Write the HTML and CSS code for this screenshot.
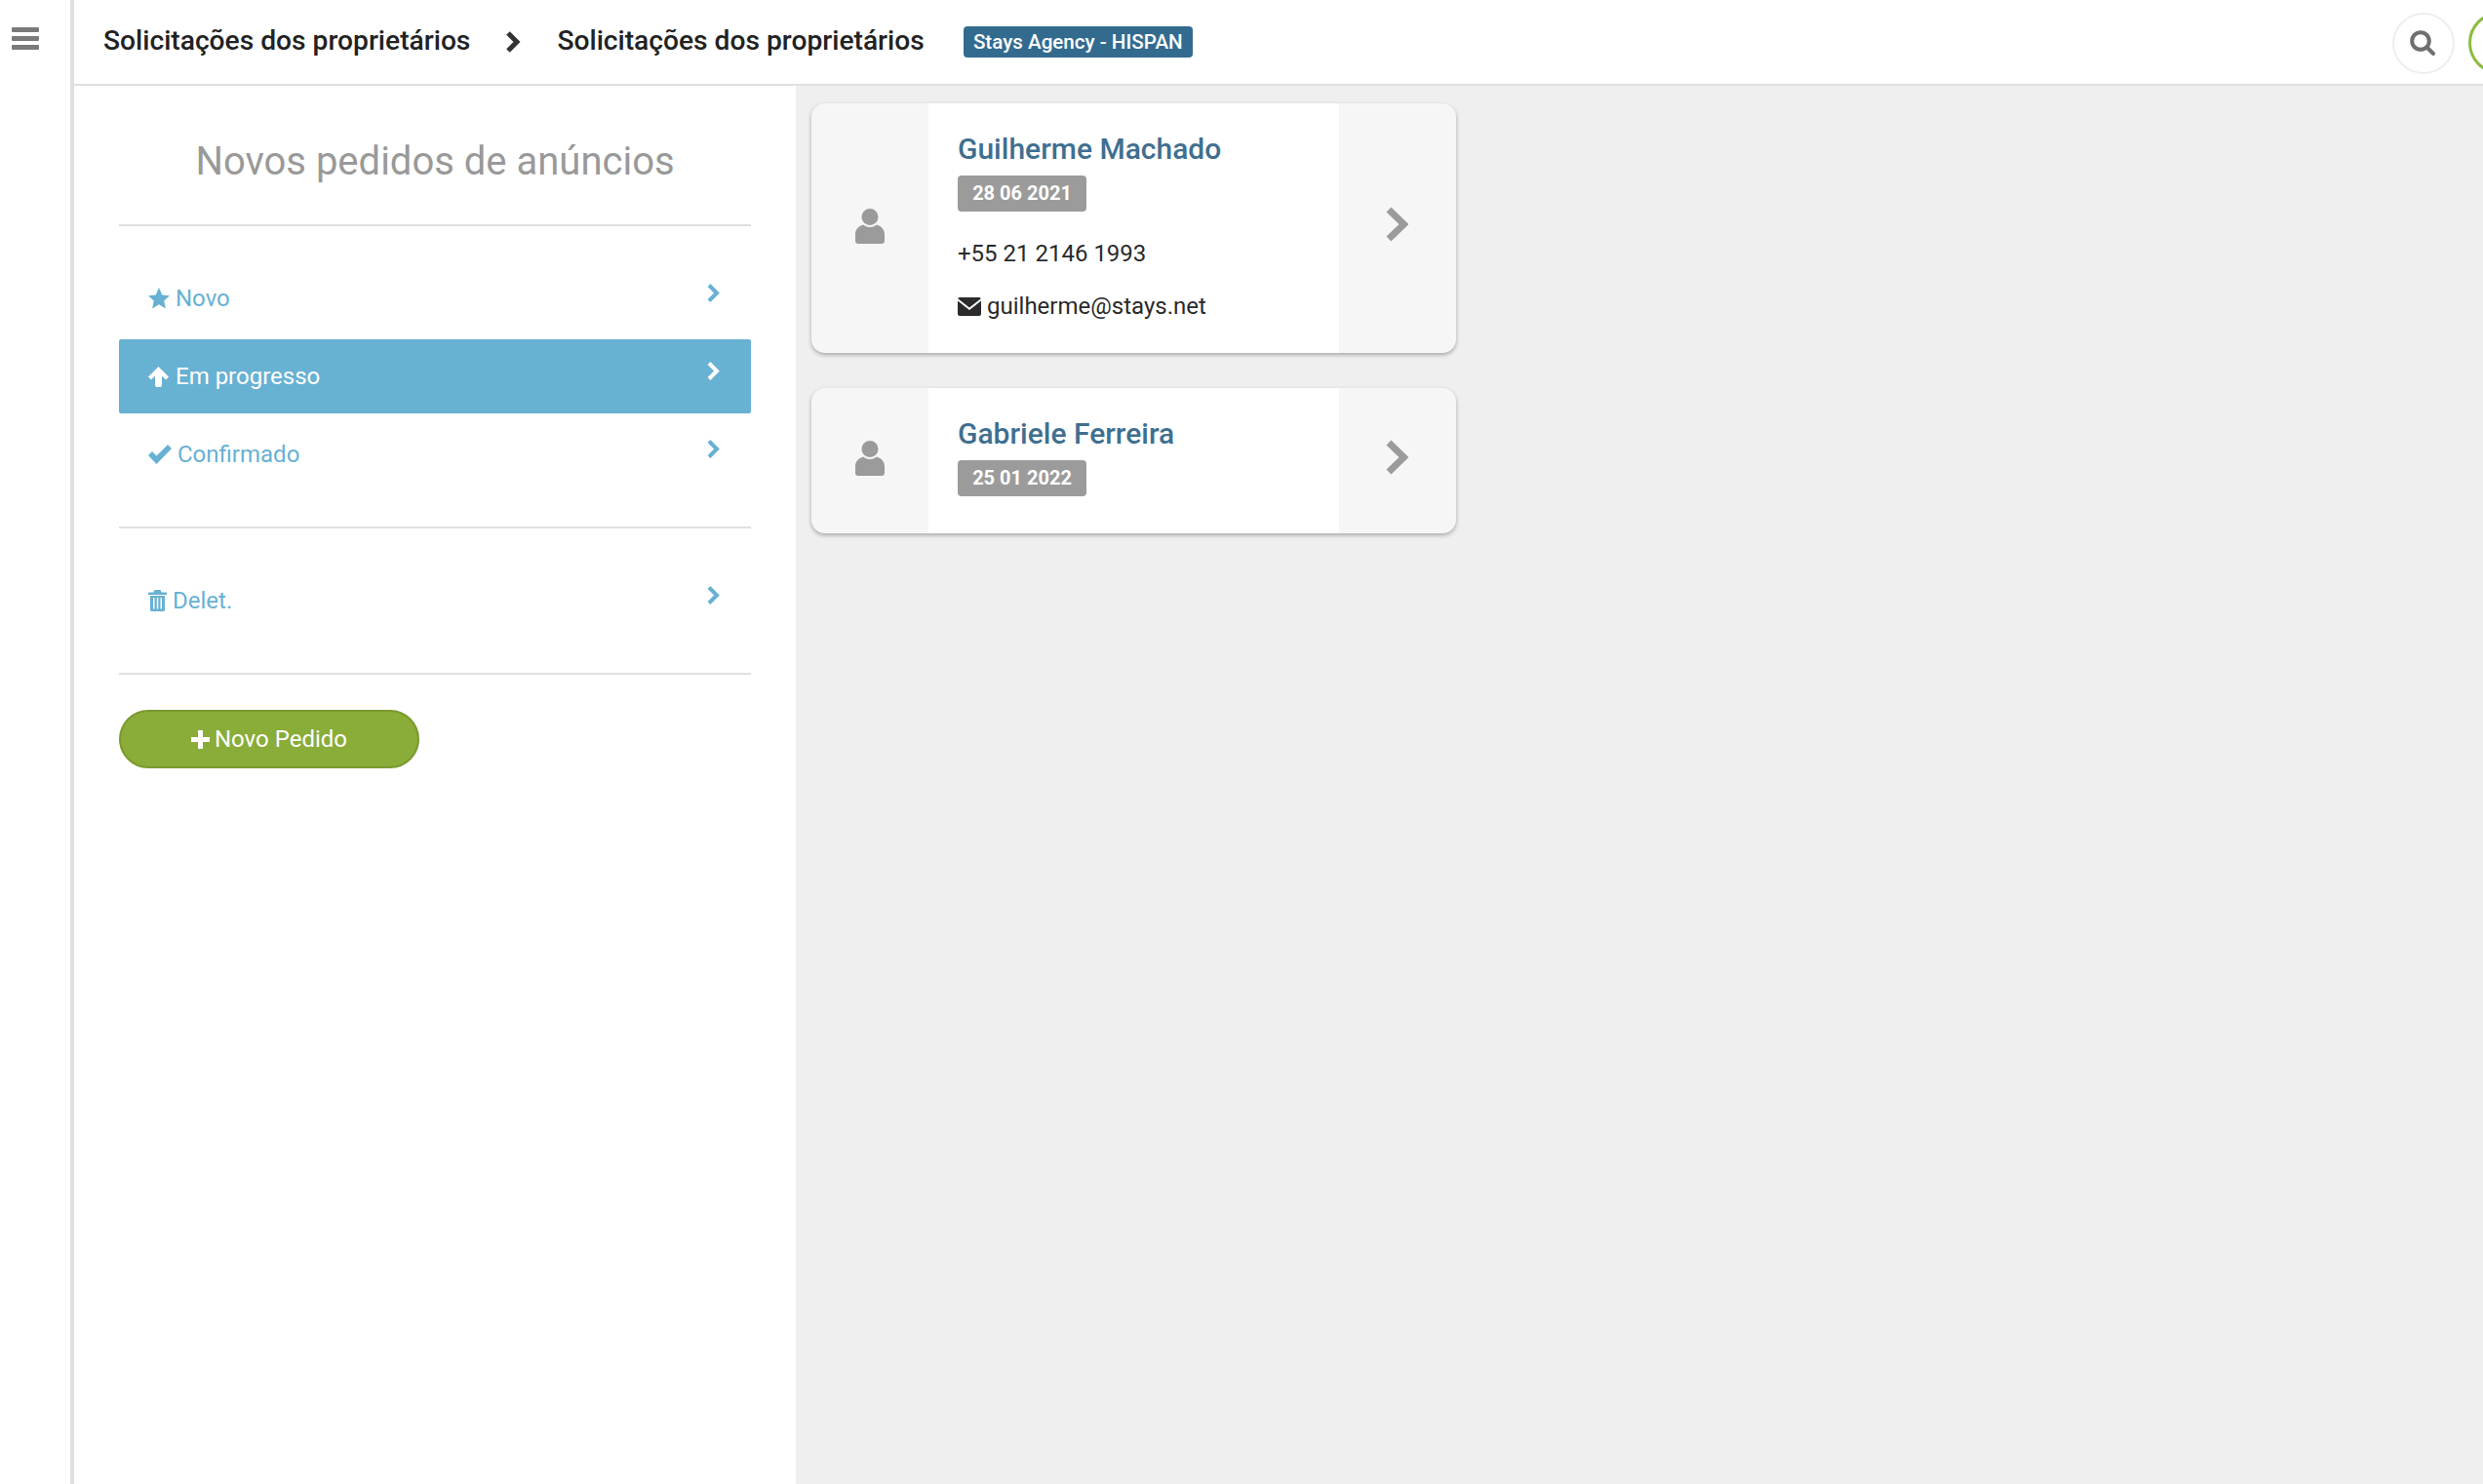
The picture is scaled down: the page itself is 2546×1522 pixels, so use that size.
FILE: index.html
```html
<!DOCTYPE html>
<html lang="pt">
<head>
<meta charset="utf-8">
<title>Solicitações dos proprietários</title>
<link rel="stylesheet" href="styles.css">
</head>
<body>
<aside class="rail">
  <svg class="burger" viewBox="0 0 28 24"><path d="M1 0h26a1 1 0 0 1 1 1v3a1 1 0 0 1-1 1H1a1 1 0 0 1-1-1V1a1 1 0 0 1 1-1zM1 9h26a1 1 0 0 1 1 1v3a1 1 0 0 1-1 1H1a1 1 0 0 1-1-1v-3a1 1 0 0 1 1-1zM1 18h26a1 1 0 0 1 1 1v3a1 1 0 0 1-1 1H1a1 1 0 0 1-1-1v-3a1 1 0 0 1 1-1z"/></svg>
</aside>
<div class="main">
  <header class="top">
    <h1 class="crumb">Solicitações dos proprietários</h1>
    <svg class="crumb-sep" viewBox="0 0 16 22"><path d="M3 2l9 9-9 9" /></svg>
    <h1 class="crumb">Solicitações dos proprietários</h1>
    <span class="agency">Stays Agency - HISPAN</span>
    <span class="spacer"></span>
    <span class="search">
      <svg viewBox="0 0 26 26"><circle cx="11" cy="11" r="8.800"/><path d="M17.500 17.500l6.500 6.500"/></svg>
    </span>
    <span class="avatar"></span>
  </header>
  <div class="body">
    <nav class="panel">
      <h2 class="panel-title">Novos pedidos de anúncios</h2>
      <ul class="menu first">
        <li class="item">
          <span class="label"><svg class="ic star" viewBox="0 0 22 22"><path d="M11 0l3.300 7.400 7.700.8-5.800 5.200 1.700 8L11 17.300 4.100 21.400l1.700-8L0 8.200l7.700-.8z"/></svg>Novo</span>
          <svg class="chev" viewBox="0 0 14 21"><path d="M3 2.500l8 8-8 8"/></svg>
        </li>
        <li class="item active">
          <span class="label"><svg class="ic up" viewBox="0 0 21 21"><path d="M10.500 0L21 10.500l-3 3-4-4V19a2 2 0 0 1-2 2H9a2 2 0 0 1-2-2V9.500l-4 4-3-3z"/></svg>Em progresso</span>
          <svg class="chev" viewBox="0 0 14 21"><path d="M3 2.500l8 8-8 8"/></svg>
        </li>
        <li class="item">
          <span class="label"><svg class="ic check" viewBox="0 0 24 20"><path d="M0 11l4-4 4.500 4.500L20 0l4 4L8.500 20z"/></svg>Confirmado</span>
          <svg class="chev" viewBox="0 0 14 21"><path d="M3 2.500l8 8-8 8"/></svg>
        </li>
      </ul>
      <ul class="menu">
        <li class="item">
          <span class="label"><svg class="ic trash" viewBox="0 0 19 22"><path d="M6.500 0h6l1 2.500H18a1 1 0 0 1 1 1V5H0V3.500a1 1 0 0 1 1-1h4.500zM2 6h15v14.500a1.500 1.500 0 0 1-1.500 1.500h-12A1.500 1.500 0 0 1 2 20.500zM5 8v11.500h1.500V8zM8.800 8v11.500h1.500V8zM12.500 8v11.500H14V8z" fill-rule="evenodd"/></svg>Delet.</span>
          <svg class="chev" viewBox="0 0 14 21"><path d="M3 2.500l8 8-8 8"/></svg>
        </li>
      </ul>
      <button class="new-btn"><svg viewBox="0 0 19 19"><path d="M7 0h5v7h7v5h-7v7H7v-7H0V7h7z"/></svg>Novo Pedido</button>
    </nav>
    <section class="list">
      <article class="card">
        <div class="side"><svg class="user" viewBox="0 0 30 36"><circle cx="15" cy="8.500" r="8.500"/><path d="M8 16.500q7 5 14 0c5 1.500 8 5 8 10V33a3 3 0 0 1-3 3H3a3 3 0 0 1-3-3v-6.500c0-5 3-8.500 8-10z"/></svg></div>
        <div class="info">
          <h3 class="name">Guilherme Machado</h3>
          <span class="date">28 06 2021</span>
          <p class="line">+55 21 2146 1993</p>
          <p class="line mail"><svg class="env" viewBox="0 0 24 19"><path d="M2 0h20a2 2 0 0 1 1.800 1.200L12 10.500.200 1.200A2 2 0 0 1 2 0zM0 3.500l12 9.500 12-9.500V17a2 2 0 0 1-2 2H2a2 2 0 0 1-2-2z"/></svg>guilherme@stays.net</p>
        </div>
        <div class="side"><svg class="go" viewBox="0 0 24 36"><path d="M4 3l15.500 15L4 33"/></svg></div>
      </article>
      <article class="card">
        <div class="side"><svg class="user" viewBox="0 0 30 36"><circle cx="15" cy="8.500" r="8.500"/><path d="M8 16.500q7 5 14 0c5 1.500 8 5 8 10V33a3 3 0 0 1-3 3H3a3 3 0 0 1-3-3v-6.500c0-5 3-8.500 8-10z"/></svg></div>
        <div class="info">
          <h3 class="name">Gabriele Ferreira</h3>
          <span class="date">25 01 2022</span>
        </div>
        <div class="side"><svg class="go" viewBox="0 0 24 36"><path d="M4 3l15.500 15L4 33"/></svg></div>
      </article>
    </section>
  </div>
</div>
</body>
</html>
```
FILE: styles.css
```css
* { box-sizing: border-box; }
html, body { margin: 0; height: 100%; }
body {
  display: flex;
  height: 1522px;
  overflow: hidden;
  font-family: Roboto, "Liberation Sans", sans-serif;
  background: #fff;
  color: #2a2a2a;
}
.rail {
  width: 76px;
  flex: none;
  border-right: 4px solid #e0e0e0;
  padding: 28px 0 0 12px;
}
.burger { display: block; width: 28px; height: 24px; fill: #7a7a7a; }
.main { flex: 1; display: flex; flex-direction: column; min-width: 0; }
.top {
  height: 88px;
  flex: none;
  display: flex;
  align-items: center;
  padding: 0 0 0 30px;
  border-bottom: 2px solid #e0e0e0;
  background: #fff;
  overflow: hidden;
}
.crumb { margin: 0 0 4px; font-size: 28.2px; font-weight: 500; color: #222; white-space: nowrap; }
.crumb-sep { width: 16px; height: 22px; margin: 0 37px 0 36px; fill: none; stroke: #333; stroke-width: 5; }
.agency {
  margin-left: 40px;
  height: 32px;
  width: 235px;
  flex: none;
  text-align: center;
  line-height: 32px;
  border-radius: 4px;
  background: #336b8f;
  color: #fff;
  font-size: 20.6px;
  font-weight: 500;
  white-space: nowrap;
}
.spacer { flex: 1; }
.search {
  width: 64px;
  height: 63px;
  margin-top: 2px;
  border: 2px solid #eee;
  border-radius: 50%;
  display: flex;
  align-items: center;
  justify-content: center;
  flex: none;
}
.search svg { width: 26px; height: 26px; margin-right: 2px; fill: none; stroke: #6f6f6f; stroke-width: 4; stroke-linecap: round; }
.avatar {
  width: 64px;
  height: 64px;
  margin-left: 14px;
  margin-right: -49px;
  margin-top: 2px;
  flex: none;
  border: 3px solid #8cbb3c;
  border-radius: 50%;
}
.body { flex: 1; display: flex; min-height: 0; background: #efefef; }
.panel {
  width: 740px;
  flex: none;
  background: #fff;
  padding: 0 46px;
}
.panel-title {
  margin: 0;
  height: 144px;
  padding-top: 54px;
  text-align: center;
  font-size: 40px;
  line-height: 48px;
  font-weight: 400;
  color: #999;
  border-bottom: 2px solid #e0e0e0;
}
.menu { list-style: none; margin: 0; border-bottom: 2px solid #e0e0e0; }
.menu.first { padding: 36px 0 36px; }
.menu + .menu { padding: 36px 0 36px; }
.item {
  height: 76px;
  margin-top: 4px;
  padding: 0 30px 0 30px;
  display: flex;
  align-items: center;
  justify-content: space-between;
  color: #67b1d3;
  font-size: 24px;
  border-radius: 2px;
}
.item:first-child { margin-top: 0; }
.item.active { background: #67b1d3; color: #fff; }
.label { display: flex; align-items: center; gap: 6px; }
.ic { flex: none; fill: currentColor; }
.star { width: 22px; height: 22px; }
.up { width: 21px; height: 21px; margin-right: 1px; }
.check { width: 24px; height: 20px; }
.trash { width: 19px; height: 22px; }
.chev { width: 14px; height: 21px; margin: 0 2px 12px 0; fill: none; stroke: currentColor; stroke-width: 4; }
.new-btn {
  display: flex;
  align-items: center;
  justify-content: center;
  gap: 5px;
  margin-top: 36px;
  width: 308px;
  height: 60px;
  padding: 0;
  border: 2px solid #7a9a2f;
  border-radius: 30px;
  background: #8aac38;
  color: #fff;
  font-family: inherit;
  font-size: 24px;
}
.new-btn svg { width: 19px; height: 19px; fill: #fff; }
.list { flex: 1; padding: 18px 0 0 16px; display: flex; flex-direction: column; gap: 36px; align-items: flex-start; }
.card {
  width: 661px;
  display: flex;
  border-radius: 14px;
  overflow: hidden;
  background: #f6f6f6;
  box-shadow: 0 2px 4px rgba(0,0,0,.3);
}
.side { width: 120px; flex: none; display: flex; align-items: center; justify-content: center; }
.user { width: 30px; height: 36px; margin-bottom: 5px; fill: #9b9b9b; }
.go { width: 24px; height: 36px; margin: 0 2px 8px 0; fill: none; stroke: #9b9b9b; stroke-width: 7; }
.info { flex: 1; background: #fff; padding: 25px 30px 33px; }
.name { margin: 0; font-size: 30px; line-height: 43px; font-weight: 500; color: #3f6f90; }
.date {
  display: block;
  width: 132px;
  height: 37px;
  margin: 6px 0 5px;
  line-height: 37px;
  text-align: center;
  border-radius: 4px;
  background: #9b9b9b;
  color: #fff;
  font-size: 20px;
  font-weight: 700;
}
.line { margin: 0; font-size: 24px; line-height: 30px; color: #2a2a2a; }
.date + .line { margin-top: 28px; }
.line + .line { margin-top: 24px; }
.mail { display: flex; align-items: center; gap: 6px; }
.env { width: 24px; height: 19px; flex: none; fill: #2b2b2b; }
```
